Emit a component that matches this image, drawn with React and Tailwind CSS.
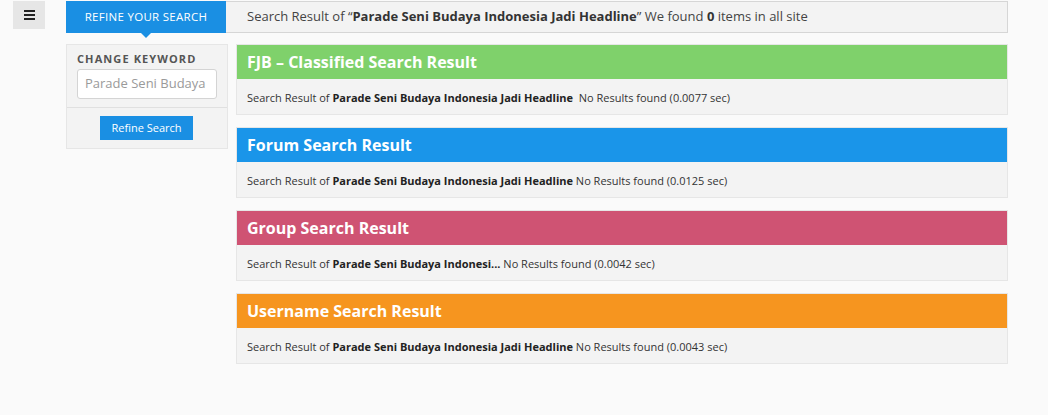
import React from 'react';

const sections = [
  { title: 'FJB – Classified Search Result', color: 'bg-[#7fd16b]', keyword: 'Parade Seni Budaya Indonesia Jadi Headline', time: '0.0077', extraSpace: true },
  { title: 'Forum Search Result', color: 'bg-[#1a95e9]', keyword: 'Parade Seni Budaya Indonesia Jadi Headline', time: '0.0125' },
  { title: 'Group Search Result', color: 'bg-[#cf5373]', keyword: 'Parade Seni Budaya Indonesi...', time: '0.0042' },
  { title: 'Username Search Result', color: 'bg-[#f6951f]', keyword: 'Parade Seni Budaya Indonesia Jadi Headline', time: '0.0043' },
];

const ResultBox = ({ section }) => (
  <div className="border border-[#e6e6e6] bg-[#f3f3f3]">
    <div className={`${section.color} h-[34px] flex items-center px-[10px]`}>
      <h2 className="text-white font-bold text-[16px] leading-none">{section.title}</h2>
    </div>
    <div className="h-[35px] flex items-center px-[10px] pt-[3px] text-[11px] text-[#333]">
      <span>
        Search Result of <b className="font-bold text-[#222]">{section.keyword}</b>
        {section.extraSpace ? '\u00a0 ' : ' '}No Results found ({section.time} sec)
      </span>
    </div>
  </div>
);

export default function App() {
  return (
    <div className="min-h-[415px] bg-[#fafafa] font-['Open_Sans',sans-serif] relative">
      <div className="flex pt-px">
        <div className="ml-[13px] w-[32px] h-[28px] bg-[#e6e6e6] flex items-center justify-center">
          <div className="flex flex-col gap-[2px]">
            <span className="block w-[11px] h-[2px] bg-[#222]"></span>
            <span className="block w-[11px] h-[2px] bg-[#222]"></span>
            <span className="block w-[11px] h-[2px] bg-[#222]"></span>
          </div>
        </div>

        <div className="ml-[21px] w-[942px]">
          {/* top bar */}
          <div className="flex h-[32px] border border-[#d6d6d6] bg-[#f3f3f3]">
            <div className="relative w-[160px] bg-[#1a8fe3] flex items-center justify-center -ml-px -mt-px h-[32px]">
              <span className="text-white text-[11.5px] uppercase tracking-[0.3px]">Refine your search</span>
              <span className="absolute left-1/2 -translate-x-1/2 top-full w-0 h-0 border-l-[5px] border-r-[5px] border-t-[5px] border-l-transparent border-r-transparent border-t-[#1a8fe3]"></span>
            </div>
            <div className="flex items-center pl-[21px] text-[13px] text-[#444]">
              <span>
                Search Result of “<b className="font-bold text-[#333]">Parade Seni Budaya Indonesia Jadi Headline</b>” We found <b className="font-bold text-[#333]">0</b> items in all site
              </span>
            </div>
          </div>

          <div className="flex gap-[8px] mt-[11px]">
            {/* sidebar */}
            <div className="w-[162px] h-[105px] border border-[#e6e6e6] bg-[#f3f3f3] self-start">
              <div className="px-[10px] pt-[7px] pb-[8px] border-b border-[#e0e0e0]">
                <div className="text-[11px] font-bold tracking-[1.1px] text-[#555] uppercase leading-[13px]">Change Keyword</div>
                <div className="mt-[4px] h-[30px] border border-[#d4d4d4] rounded-[3px] bg-white flex items-center px-[7px] overflow-hidden">
                  <span className="text-[13px] text-[#9a9a9a] whitespace-nowrap">Parade Seni Budaya</span>
                </div>
              </div>
              <div className="flex justify-center pt-[8px]">
                <button className="bg-[#1a8fe3] text-white text-[11px] w-[93px] h-[24px] -ml-px">Refine Search</button>
              </div>
            </div>

            {/* results */}
            <div className="flex flex-col gap-[12px] w-[772px]">
              {sections.map((s, i) => (
                <ResultBox key={i} section={s} />
              ))}
            </div>
          </div>
        </div>
      </div>
    </div>
  );
}
